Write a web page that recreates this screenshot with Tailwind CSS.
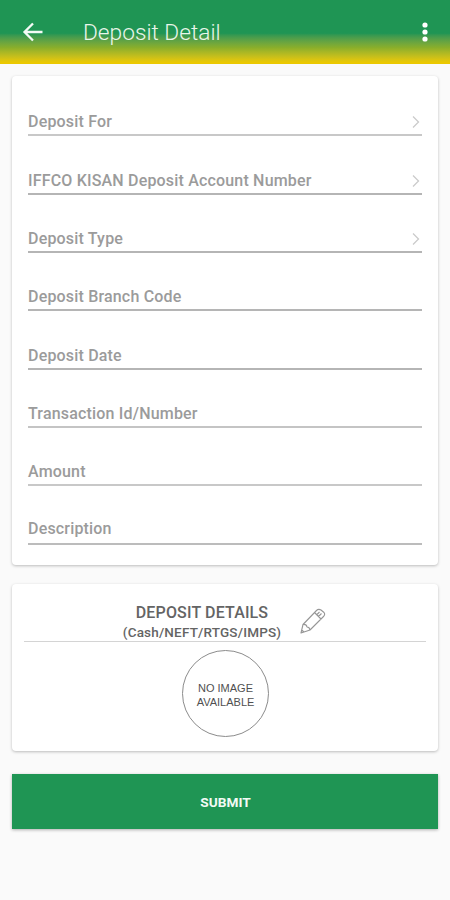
<!DOCTYPE html>
<html lang="en">
<head>
<meta charset="utf-8">
<title>Deposit Detail</title>
<script src="https://cdn.jsdelivr.net/npm/@tailwindcss/browser@4"></script>
</head>
<body class="h-[900px] w-[450px] overflow-hidden bg-[#fafafa] font-['Roboto',sans-serif]">
<header class="flex h-16 items-center bg-linear-to-b from-[#1f9554] from-52% via-[#88ae2b] via-74% to-[#eac800] to-97% pl-[22px] pr-[19px]">
  <svg class="h-[22px] w-[22px]" viewBox="0 0 22 22" fill="none" stroke="#f4fbf6" stroke-width="2.3"><path d="M20.500 11H3M11 2.500 2.500 11 11 19.500"/></svg>
  <h1 class="ml-[39px] pt-[2px] text-[22.7px] leading-8 font-light text-[#eaf6ea]">Deposit Detail</h1>
  <svg class="ml-auto h-[22px] w-3" viewBox="0 0 12 22" fill="#fff"><circle cx="6" cy="4" r="2.6"/><circle cx="6" cy="11" r="2.6"/><circle cx="6" cy="18" r="2.6"/></svg>
</header>
<main class="flex flex-col px-3 pt-3">
  <section class="h-[489px] rounded-[4px] bg-white px-4 pt-[2px] text-[16px] font-medium tracking-[0.18px] text-[#9b9b9b] shadow-[0_1px_3px_rgba(0,0,0,0.25)]">
    <div class="flex h-[58.35px] items-end justify-between border-b-2 border-[#c8c8c8] pb-[2.2px] leading-5">Deposit For<svg class="mb-[3px] h-3.5 w-3" viewBox="0 0 12 14" fill="none" stroke="#cbcbcb" stroke-width="1.3"><path d="m3 1.500 5.500 5.500-5.500 5.500"/></svg></div>
    <div class="flex h-[58.35px] items-end justify-between border-b-2 border-[#b5b5b5] pb-[2.2px] leading-5">IFFCO KISAN Deposit Account Number<svg class="mb-[3px] h-3.5 w-3" viewBox="0 0 12 14" fill="none" stroke="#cbcbcb" stroke-width="1.3"><path d="m3 1.500 5.500 5.500-5.500 5.500"/></svg></div>
    <div class="flex h-[58.35px] items-end justify-between border-b-2 border-[#b5b5b5] pb-[2.2px] leading-5">Deposit Type<svg class="mb-[3px] h-3.5 w-3" viewBox="0 0 12 14" fill="none" stroke="#cbcbcb" stroke-width="1.3"><path d="m3 1.500 5.500 5.500-5.500 5.500"/></svg></div>
    <div class="flex h-[58.35px] items-end border-b-2 border-[#b5b5b5] pb-[2.2px] leading-5">Deposit Branch Code</div>
    <div class="flex h-[58.35px] items-end border-b-2 border-[#b5b5b5] pb-[2.2px] leading-5">Deposit Date</div>
    <div class="flex h-[58.35px] items-end border-b-2 border-[#c4c4c4] pb-[2.2px] leading-5">Transaction Id/Number</div>
    <div class="flex h-[58.35px] items-end border-b-2 border-[#c8c8c8] pb-[2.2px] leading-5">Amount</div>
    <div class="flex h-[58.35px] items-end border-b-2 border-[#bcbcbc] pb-[3.5px] leading-5">Description</div>
  </section>
  <section class="mt-[19px] h-[167px] rounded-[4px] bg-white px-3 pt-[18px] shadow-[0_1px_3px_rgba(0,0,0,0.25)]">
    <div class="flex h-[40px] border-b border-[#d4d4d4] pl-[98px]">
      <div class="w-[160px] pt-px text-center whitespace-nowrap text-[#646464]">
        <div class="text-[16px] leading-5 font-medium tracking-[0.15px]">DEPOSIT DETAILS</div>
        <div class="text-[13.5px] leading-[19px] font-medium tracking-[0.18px]">(Cash/NEFT/RTGS/IMPS)</div>
      </div>
      <svg class="mt-1.5 ml-[18px] h-[26px] w-[26px]" viewBox="0 0 26 26" fill="none" stroke="#969696" stroke-width="1.1" stroke-linejoin="round"><path d="M1 25 3 16.500 16.500 2.500q2-2 4.500-.5l3 2.500q1.500 2-.5 4L10 22zM3 16.500q3.500-.5 4 2.500 2.500 0 3 3M14.500 4.500l6.500 6.500M16.500 7l3-3M18.500 8.500l3-3M1 25l3-1-2.300-2z"/></svg>
    </div>
    <div class="mx-auto mt-[8px] flex h-[87px] w-[87px] flex-col justify-center rounded-full border border-[#8c8c8c] pt-[4px] pl-px text-center font-['Liberation_Sans',sans-serif] text-[11px] leading-[13.5px] text-[#505050]"><span>NO IMAGE</span><span>AVAILABLE</span></div>
  </section>
  <button class="mt-[23px] h-[55px] bg-[#1f9554] pt-[2px] pl-px text-[13.7px] font-bold text-[#f2faf4] shadow-[0_1px_3px_rgba(0,0,0,0.3)]">SUBMIT</button>
</main>
</body>
</html>
